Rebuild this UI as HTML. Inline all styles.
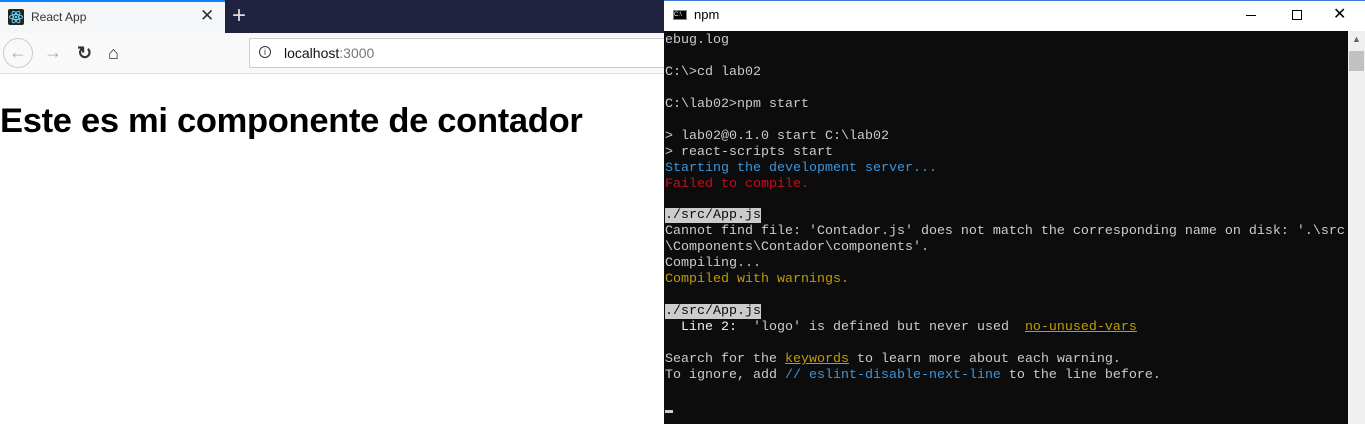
<!DOCTYPE html>
<html><head><style>
body{margin:0;width:1365px;height:424px;overflow:hidden;position:relative;background:#fff;font-family:"Liberation Sans",sans-serif}
.abs{position:absolute}
.term{left:664px;top:0;width:701px;height:424px;background:#0c0c0c}
.tt{left:664px;top:0;width:701px;height:31px;background:#fff;border-top:1px solid #3a7bd5;box-sizing:border-box}
pre{margin:0;position:absolute;left:665px;top:33px;font-family:"Liberation Mono",monospace;font-size:13.33px;line-height:15.95px;color:#cccccc}
.b{color:#3a96dd}.r{color:#c50f1f}.y{color:#c19c00}.u{text-decoration:underline}.hl{background:#cccccc;color:#0c0c0c}.w{color:#f2f2f2}
</style></head><body>
<div class="abs" style="left:0;top:0;width:664px;height:33px;background:#202340"></div>
<div class="abs" style="left:0;top:0;width:225px;height:33px;background:#f5f6f7;border-top:2px solid #0a84ff;box-sizing:border-box"></div>
<div class="abs" style="left:8px;top:9px;width:16px;height:16px;background:#222;border-radius:2px"></div>
<svg class="abs" style="left:8px;top:9px" width="16" height="16" viewBox="0 0 16 16"><g fill="none" stroke="#61dafb" stroke-width="0.9"><ellipse cx="8" cy="8" rx="6.5" ry="2.5"/><ellipse cx="8" cy="8" rx="6.5" ry="2.5" transform="rotate(60 8 8)"/><ellipse cx="8" cy="8" rx="6.5" ry="2.5" transform="rotate(120 8 8)"/></g><circle cx="8" cy="8" r="1.2" fill="#61dafb"/></svg>
<div class="abs" style="left:31px;top:10px;font-size:12px;color:#333">React App</div>
<div class="abs" style="left:200px;top:6px;font-size:17px;color:#333">✕</div>
<div class="abs" style="left:232px;top:2px;font-size:24px;color:#ddd;font-weight:300">+</div>
<div class="abs" style="left:0;top:33px;width:664px;height:40px;background:#f9f9fa;border-bottom:1px solid #ddd"></div>
<div class="abs" style="left:3px;top:38px;width:30px;height:30px;border:1px solid #ccc;border-radius:50%;box-sizing:border-box;background:#f9f9fa;color:#aaa;text-align:center;line-height:27px;font-size:18px">←</div>
<div class="abs" style="left:44px;top:42px;color:#aaa;font-size:18px">→</div>
<div class="abs" style="left:77px;top:43px;color:#333;font-size:18px;font-weight:bold">↻</div>
<div class="abs" style="left:108px;top:43px;color:#333;font-size:18px">⌂</div>
<div class="abs" style="left:249px;top:38px;width:420px;height:30px;background:#fff;border:1px solid #ccc;border-radius:2px;box-sizing:border-box"></div>
<div class="abs" style="left:259px;top:46px;width:12px;height:12px;border:1.3px solid #333;border-radius:50%;box-sizing:border-box;font-size:9px;text-align:center;line-height:10px;color:#333">i</div>
<div class="abs" style="left:284px;top:45px;font-size:14px;color:#111">localhost<span style="color:#777">:3000</span></div>
<div class="abs" style="left:0;top:102px;font-size:34.5px;font-weight:bold;color:#000;letter-spacing:-0.3px">Este es mi componente de contador</div>
<div class="abs term"></div>
<div class="abs tt"></div>
<div class="abs" style="left:673px;top:10px;width:14px;height:10px;background:#000;border:1px solid #888;box-sizing:border-box;font-size:6px;color:#fff;line-height:8px">C:\</div>
<div class="abs" style="left:694px;top:7px;font-size:13px;color:#000">npm</div>
<div class="abs" style="left:1246px;top:15px;width:10px;height:1px;background:#000"></div>
<div class="abs" style="left:1292px;top:10px;width:10px;height:10px;border:1px solid #000;box-sizing:border-box"></div>
<div class="abs" style="left:1333px;top:4px;font-size:16px;color:#000">✕</div>
<div class="abs" style="left:1348px;top:31px;width:17px;height:393px;background:#f0f0f0"></div>
<div class="abs" style="left:1349px;top:51px;width:15px;height:20px;background:#c1c1c1"></div>
<div class="abs" style="left:1352px;top:34px;font-size:9px;color:#666">▲</div>
<pre>ebug.log

C:\&gt;cd lab02

C:\lab02&gt;npm start

&gt; lab02@0.1.0 start C:\lab02
&gt; react-scripts start
<span class="b">Starting the development server...</span>
<span class="r">Failed to compile.</span>

<span class="hl">./src/App.js</span>
Cannot find file: 'Contador.js' does not match the corresponding name on disk: '.\src
\Components\Contador\components'.
Compiling...
<span class="y">Compiled with warnings.</span>

<span class="hl">./src/App.js</span>
  <span class="w">Line 2:</span>  'logo' is defined but never used  <span class="y u">no-unused-vars</span>

Search for the <span class="y u">keywords</span> to learn more about each warning.
To ignore, add <span class="b">// eslint-disable-next-line</span> to the line before.

</pre>
<div class="abs" style="left:665px;top:410px;width:8px;height:3px;background:#ccc"></div>
</body></html>
